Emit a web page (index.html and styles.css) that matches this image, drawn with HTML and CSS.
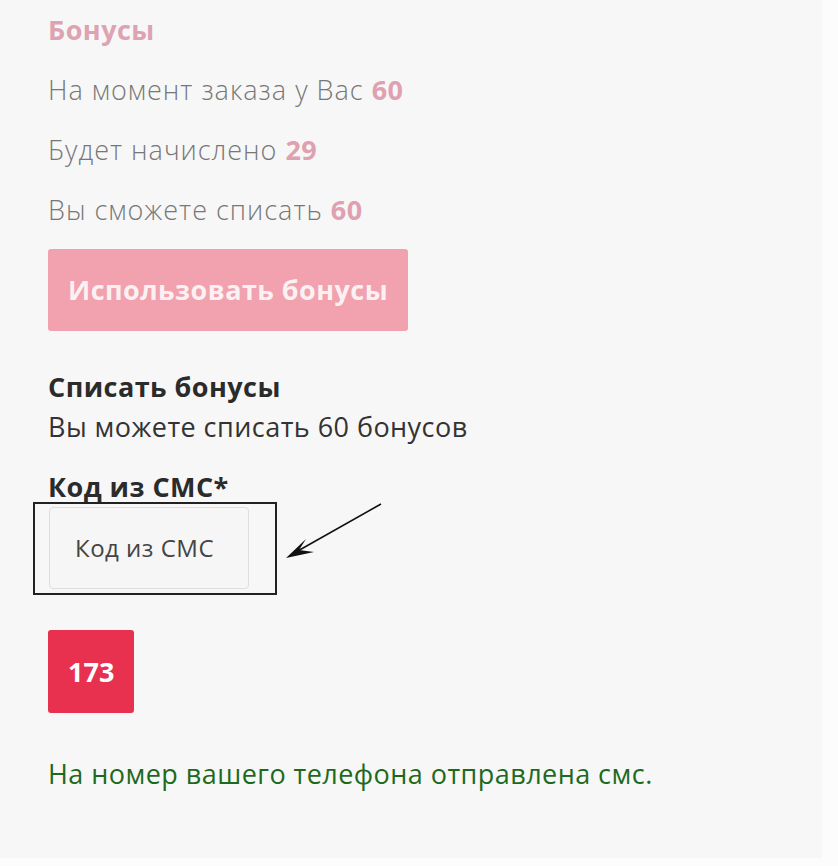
FILE: index.html
```html
<!DOCTYPE html>
<html lang="ru">
<head>
<meta charset="utf-8">
<title>Бонусы</title>
<link rel="stylesheet" href="styles.css">
</head>
<body>
<div class="panel">
  <div class="heading">Бонусы</div>
  <div class="line">На момент заказа у Вас <b>60</b></div>
  <div class="line">Будет начислено <b>29</b></div>
  <div class="line">Вы сможете списать <b>60</b></div>
  <div class="use-btn">Использовать бонусы</div>
  <div class="sub-title">Списать бонусы</div>
  <div class="sub-text">Вы можете списать 60 бонусов</div>
  <div class="label">Код из СМС*</div>
  <div class="highlight">
    <div class="code-input">Код из СМС</div>
  </div>
  <div class="code-btn">173</div>
  <div class="notice">На номер вашего телефона отправлена смс.</div>
  <svg class="arrow" width="838" height="866" viewBox="0 0 838 866">
    <line x1="381" y1="504" x2="296" y2="552" stroke="#111" stroke-width="1.6"/>
    <path d="M286 558 L306 539 L299 550 L314 552 Z" fill="#111"/>
  </svg>
</div>
</body>
</html>
```

FILE: styles.css
```css
html, body {
  margin: 0;
  padding: 0;
  background: #fcfcfc;
}
.panel {
  position: relative;
  width: 774px;
  height: 858px;
  padding-left: 48px;
  background: #f7f7f7;
  font-family: "Open Sans", "Liberation Sans", sans-serif;
  font-size: 27px;
  letter-spacing: 0.45px;
  display: flex;
  flex-direction: column;
  align-items: flex-start;
}
.heading {
  line-height: 60px;
  font-weight: 700;
  color: #dea3b3;
}
.line {
  line-height: 60px;
  font-weight: 300;
  letter-spacing: 1px;
  color: #777;
}
.line b {
  font-weight: 700;
  letter-spacing: 0.45px;
  color: #dfa1b1;
}
.use-btn {
  margin-top: 9px;
  height: 82px;
  line-height: 82px;
  padding: 0 20px;
  background: #f1a2ae;
  border-radius: 3px;
  color: #fbf1f3;
  font-weight: 700;
}
.sub-title {
  margin-top: 36px;
  line-height: 40px;
  font-weight: 700;
  color: #2b2b2b;
}
.sub-text {
  line-height: 40px;
  color: #333;
}
.label {
  margin-top: 25px;
  line-height: 30px;
  font-weight: 700;
  color: #2b2b2b;
}
.highlight {
  margin-left: -15px;
  border: 2px solid #222;
  padding: 3px 26px 4px 14px;
}
.code-input {
  width: 173px;
  height: 80px;
  line-height: 80px;
  padding-left: 25px;
  border: 1px solid #dedede;
  border-radius: 4px;
  background: #f6f6f6;
  font-size: 24px;
  letter-spacing: 0.5px;
  color: #444;
}
.code-btn {
  margin-top: 35px;
  height: 83px;
  line-height: 83px;
  padding: 0 20px;
  background: #e8304f;
  border-radius: 3px;
  color: #fff;
  font-weight: 700;
  letter-spacing: 0;
}
.notice {
  margin-top: 41px;
  line-height: 40px;
  color: #1d6a1d;
}
.arrow {
  position: absolute;
  left: 0;
  top: 0;
  pointer-events: none;
}
```
